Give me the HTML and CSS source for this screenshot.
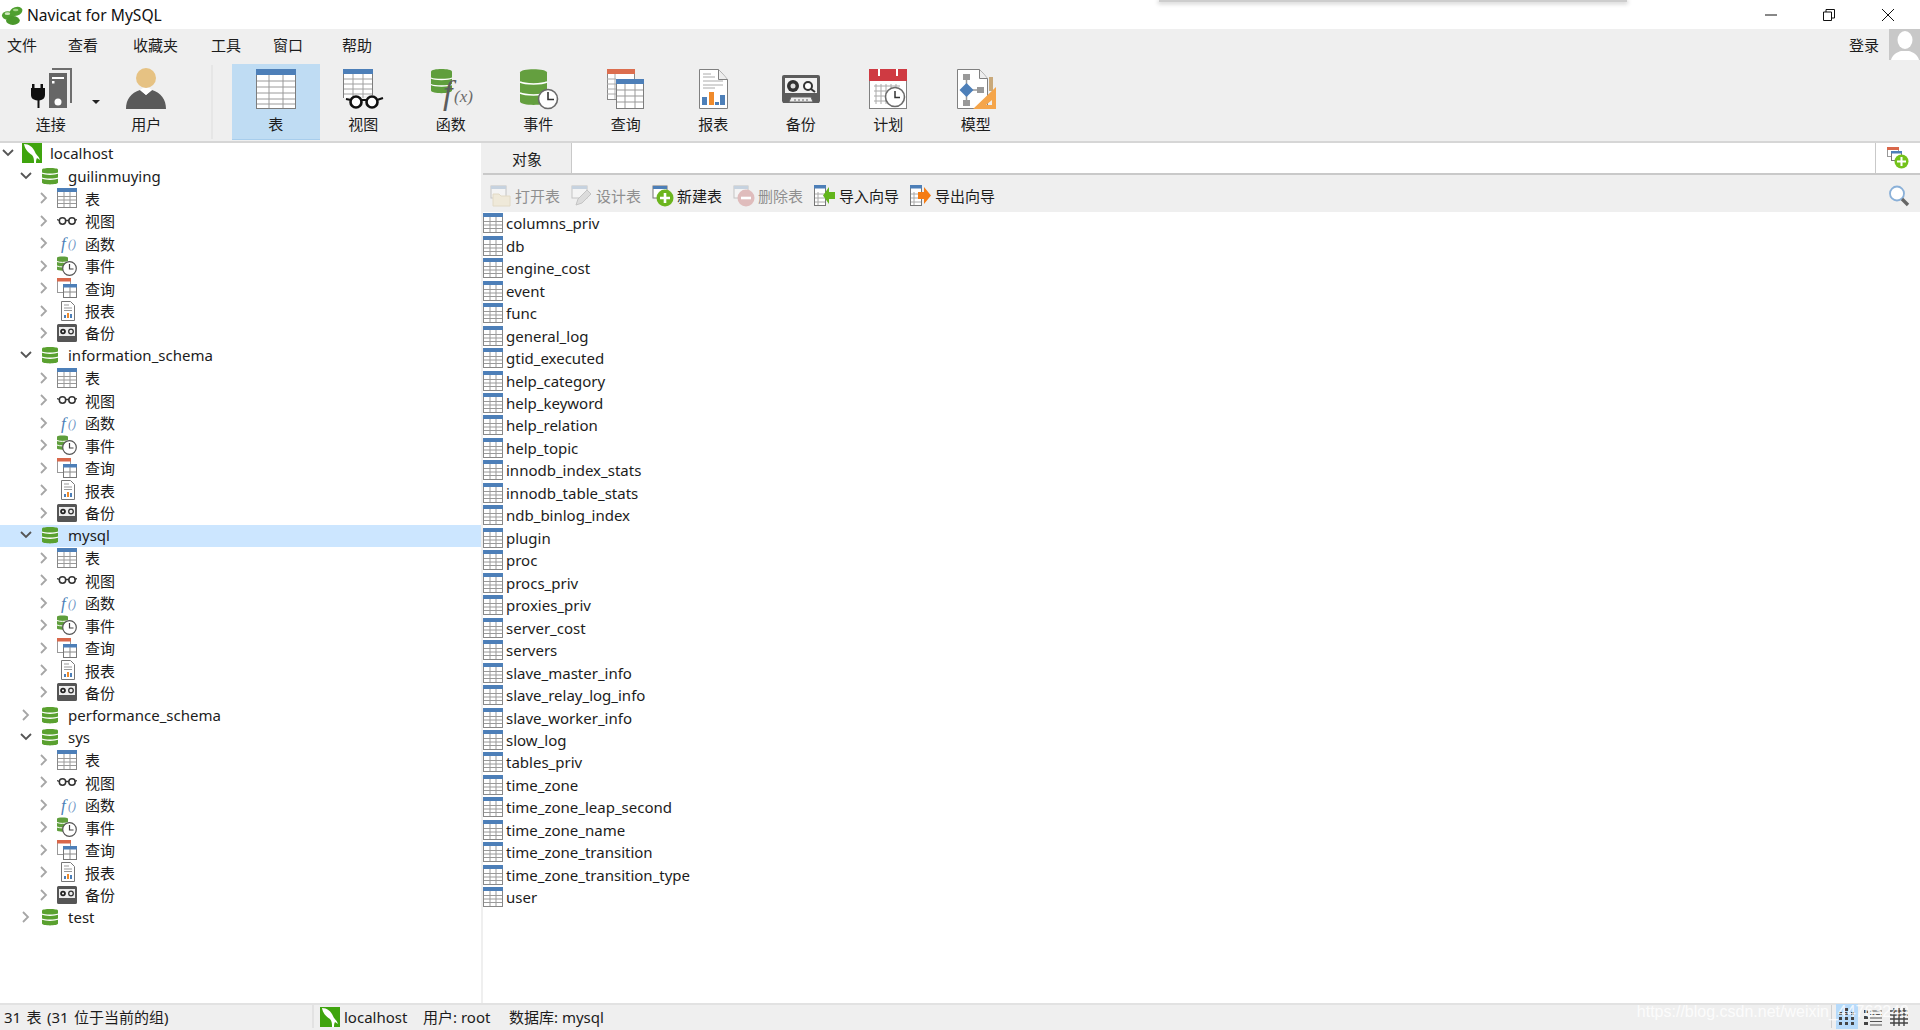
FILE: index.html
```html
<!DOCTYPE html>
<html lang="zh">
<head>
<meta charset="utf-8">
<title>Navicat for MySQL</title>
<link rel="stylesheet" href="styles.css">
</head>
<body>
<svg class="defs" aria-hidden="true">
  <symbol id="logo" viewBox="0 0 24 24">
    <ellipse cx="7.500" cy="12.500" rx="6.500" ry="4.500" fill="#4f9f2f"/>
    <ellipse cx="16.500" cy="8" rx="7" ry="4.800" fill="#4f9f2f" transform="rotate(-18 16.500 8)"/>
    <ellipse cx="13" cy="18" rx="7.500" ry="4.800" fill="#4a982b"/>
    <ellipse cx="7" cy="10.500" rx="3" ry="1.400" fill="#cfe8bd"/>
    <ellipse cx="16" cy="6.500" rx="3" ry="1.300" fill="#a6d68a"/>
  </symbol>
  <symbol id="mysql" viewBox="0 0 20 20">
    <rect width="20" height="20" fill="#3fa40e"/>
    <path d="M2 1c5 0 9 3 11 8 1 3 4 4 5 8l-3-2c-1 2-1 3-1 5h-2c0-3 0-6-2-8C7 10 3 7 2 1z" fill="#fff"/>
  </symbol>
  <symbol id="db" viewBox="0 0 16 18">
    <path d="M0 2.500C0 .5 16 .5 16 2.500v13c0 2.500-16 2.500-16 0z" fill="#5aa12f"/>
    <path d="M0 6c3 1.600 13 1.600 16 0M0 11c3 1.600 13 1.600 16 0" fill="none" stroke="#fff" stroke-width="1.400"/>
  </symbol>
  <symbol id="chev-r" viewBox="0 0 12 14"><path d="M3 2l5 5-5 5" fill="none" stroke="#a6a6a6" stroke-width="1.800"/></symbol>
  <symbol id="chev-d" viewBox="0 0 14 12"><path d="M2 3l5 5 5-5" fill="none" stroke="#555" stroke-width="1.800"/></symbol>
  <symbol id="s-tbl" viewBox="0 0 20 20">
    <rect x=".5" y=".5" width="19" height="19" fill="#fff" stroke="#888"/>
    <rect width="20" height="4" fill="#4d7fb8"/>
    <path d="M7 4v15M13 4v15M1 8.500h18M1 12h18M1 15.500h18" stroke="#9a9a9a"/>
  </symbol>
  <symbol id="s-glass" viewBox="0 0 20 20">
    <circle cx="5.500" cy="10" r="3.200" fill="none" stroke="#333" stroke-width="1.500"/>
    <circle cx="15" cy="10" r="3.200" fill="none" stroke="#333" stroke-width="1.500"/>
    <path d="M8.500 9.500h3.500M0 8.500l2.500 1M20 8.500l-2.500 1" stroke="#333" stroke-width="1.300"/>
  </symbol>
  <symbol id="s-event" viewBox="0 0 20 20">
    <path d="M0 1.500C0 0 11 0 11 1.500v12c0 1.500-11 1.500-11 0z" fill="#5f9e3c"/>
    <path d="M0 5.500c3 1.200 8 1.200 11 0M0 10c3 1.200 8 1.200 11 0" stroke="#fff" fill="none"/>
    <circle cx="12.500" cy="12.500" r="6.800" fill="#fff" stroke="#555" stroke-width="1.200"/>
    <path d="M12.500 8v5h4" fill="none" stroke="#444" stroke-width="1.200"/>
  </symbol>
  <symbol id="s-query" viewBox="0 0 20 20">
    <rect x=".5" y=".5" width="13" height="14" fill="#fff" stroke="#999"/>
    <rect width="14" height="3.500" fill="#d9674a"/>
    <rect x="6.500" y="6.500" width="13" height="13" fill="#fff" stroke="#777"/>
    <rect x="6" y="6" width="14" height="3.500" fill="#4d7fb8"/>
    <path d="M13 9v10M7 14h12" stroke="#888"/>
  </symbol>
  <symbol id="s-report" viewBox="0 0 20 20">
    <path d="M4.500.5h9l4 4v15h-13z" fill="#fff" stroke="#777"/>
    <path d="M7 4h5M7 7h8M7 9.500h8" stroke="#999"/>
    <rect x="7" y="14" width="2" height="3" fill="#4d7fb8"/>
    <rect x="10" y="12" width="2" height="5" fill="#ee8a2a"/>
    <rect x="13" y="13" width="2" height="4" fill="#4d7fb8"/>
  </symbol>
  <symbol id="s-tape" viewBox="0 0 20 20">
    <path d="M1.500 1h17A1.500 1.500 0 0 1 20 2.500v15a1.500 1.500 0 0 1-1.500 1.500h-17A1.500 1.500 0 0 1 0 17.500v-15A1.500 1.500 0 0 1 1.500 1z" fill="#555"/>
    <rect x="2" y="4" width="16" height="9" fill="#eee"/>
    <circle cx="6" cy="8.500" r="2.800" fill="#222"/><circle cx="6" cy="8.500" r="1" fill="#fff"/>
    <circle cx="14" cy="8.500" r="2.300" fill="none" stroke="#333" stroke-width="1.300"/>
  </symbol>

  <symbol id="t-conn" viewBox="0 0 44 44">
    <path d="M23 2h19v34" fill="none" stroke="#6e6e6e" stroke-width="2"/>
    <rect x="20" y="6" width="18" height="35" fill="#666"/>
    <rect x="23" y="10" width="12" height="2" fill="#fff"/>
    <rect x="23" y="14" width="2.500" height="2.500" fill="#fff"/>
    <circle cx="29" cy="35" r="3.500" fill="#fff"/>
    <path d="M3 17h2.500v4h6v-4H14v4h2v7c0 3-2 5-5.500 5.500V41h-2v-7.500C4 33 2 31 2 28v-7h1z" fill="#111"/>
  </symbol>
  <symbol id="t-user" viewBox="0 0 44 44">
    <circle cx="22" cy="11" r="10" fill="#e6c283"/>
    <path d="M2 42c0-10 5-16 14-19l6 5 6-5c9 3 14 9 14 19z" fill="#5a5a5a"/>
    <path d="M16 23l6 5 6-5-3-2h-6z" fill="#fff"/>
  </symbol>
  <symbol id="t-table" viewBox="0 0 44 44">
    <rect x="2.500" y="2.500" width="39" height="39" fill="#fff" stroke="#7d7d7d"/>
    <rect x="2" y="2" width="40" height="6" fill="#4d7fb8"/>
    <path d="M15 8v33M29 8v33M3 14h38M3 20h38M3 26h38M3 32h38M3 37h38" stroke="#9a9a9a"/>
  </symbol>
  <symbol id="t-view" viewBox="0 0 44 44">
    <path d="M2.500 31V2.500h29V28" fill="#fff" stroke="#7d7d7d"/>
    <rect x="2" y="2" width="30" height="5" fill="#4d7fb8"/>
    <path d="M12 7v24M22 7v24M3 12h28M3 17h28M3 22h28M3 27h28" stroke="#a0a0a0"/>
    <circle cx="15" cy="35" r="5.500" fill="#fff" stroke="#111" stroke-width="2.600"/>
    <circle cx="31" cy="35" r="5.500" fill="#fff" stroke="#111" stroke-width="2.600"/>
    <path d="M20 33h6M5 32l5 1M42 31l-6 2" stroke="#111" stroke-width="2.200"/>
  </symbol>
  <symbol id="t-event" viewBox="0 0 44 44">
    <path d="M4 5.500C4 1 31 1 31 5.500v29c0 4.500-27 4.500-27 0z" fill="#649f3f"/>
    <path d="M4 15c5 2.500 22 2.500 27 0M4 26c5 2.500 22 2.500 27 0" stroke="#fff" fill="none" stroke-width="1.500"/>
    <circle cx="32" cy="32" r="9.500" fill="#fff" stroke="#6a6a6a" stroke-width="1.600"/>
    <path d="M32 25v7.500h6" fill="none" stroke="#333" stroke-width="1.600"/>
  </symbol>
  <symbol id="t-query" viewBox="0 0 44 44">
    <rect x="3.500" y="2.500" width="27" height="30" fill="#fff" stroke="#888"/>
    <rect x="3" y="2" width="28" height="5" fill="#dc6e4f"/>
    <path d="M11 7v25M3 12h9M3 17h9M3 22h9M3 27h9" stroke="#aaa"/>
    <rect x="12.500" y="12.500" width="27" height="29" fill="#fff" stroke="#7d7d7d"/>
    <rect x="12" y="12" width="28" height="5" fill="#4d7fb8"/>
    <path d="M21 17v24M31 17v24M13 23h26M13 29h26M13 35h26" stroke="#999"/>
  </symbol>
  <symbol id="t-report" viewBox="0 0 44 44">
    <path d="M8.500 2.500h19l9 10v29h-28z" fill="#fff" stroke="#808080"/>
    <path d="M27.500 2.500v10h9" fill="#eee" stroke="#808080"/>
    <path d="M12 7h8M12 10h12M12 14h20M12 18h20M12 21h12" stroke="#aaa"/>
    <rect x="11" y="30" width="5" height="8" fill="#4d7fb8"/>
    <rect x="18" y="25" width="5" height="13" fill="#ef8a2b"/>
    <rect x="24" y="35" width="4" height="3" fill="#4d7fb8"/>
    <rect x="29" y="28" width="5" height="10" fill="#4d7fb8"/>
  </symbol>
  <symbol id="t-tape" viewBox="0 0 44 44">
    <path d="M5 8h34a2 2 0 0 1 2 2v24l-1 2H4l-1-2V10a2 2 0 0 1 2-2z" fill="#5c5c5c"/>
    <rect x="6" y="11" width="32" height="15" fill="#f2f2f2"/>
    <circle cx="14" cy="19" r="6" fill="#333"/><circle cx="14" cy="19" r="2.500" fill="#ddd"/>
    <circle cx="29" cy="19" r="4" fill="#fff" stroke="#333" stroke-width="2"/>
    <path d="M32 22l4 3" stroke="#333" stroke-width="2"/>
    <path d="M10 35l2-5h20l2 5z" fill="#eee" stroke="#666"/>
    <path d="M15 33h14" stroke="#666" stroke-dasharray="2 2"/>
  </symbol>
  <symbol id="t-plan" viewBox="0 0 44 44">
    <rect x="3.500" y="2.500" width="37" height="39" fill="#fff" stroke="#808080"/>
    <rect x="3" y="2" width="38" height="12" fill="#cf3a42"/>
    <path d="M13 2v7M31 2v7" stroke="#fff" stroke-width="2"/>
    <path d="M8 19h26M8 24h26M8 29h26M8 34h26M10 17v20M15 17v20M20 17v20M25 17v20M30 17v20" stroke="#aaa"/>
    <circle cx="29" cy="30" r="9.500" fill="#fff" stroke="#6a6a6a" stroke-width="1.600"/>
    <path d="M29 24v6.500h5" fill="none" stroke="#333" stroke-width="1.500"/>
  </symbol>
  <symbol id="t-model" viewBox="0 0 44 44">
    <path d="M3.500 2.500h22l8 9v30h-30z" fill="#fff" stroke="#808080"/>
    <path d="M25.500 2.500v9h8" fill="#eee" stroke="#808080"/>
    <rect x="9" y="7" width="7" height="6" fill="#999"/>
    <rect x="9" y="33" width="7" height="6" fill="#999"/>
    <rect x="23" y="20" width="7" height="6" fill="#999"/>
    <path d="M12.500 13v20M17 23h7" stroke="#999" stroke-width="1.500"/>
    <path d="M12.500 16l7 7-7 7-7-7z" fill="#4d7fb8"/>
    <rect x="35" y="10" width="4" height="14" fill="#c9a97a"/>
    <path d="M42 20v22H19zM38 33l-6 5h6z" fill="#f5a54a" fill-rule="evenodd"/>
  </symbol>

  <symbol id="o-open" viewBox="0 0 22 22">
    <rect x="1" y="1" width="15" height="12" fill="#f4f4f4" stroke="#c4c4c4"/>
    <rect x="1" y="1" width="15" height="3" fill="#c6d2df"/>
    <path d="M3 9h6l2 2h9v10H3z" fill="#efe9d9" stroke="#e2dac6"/>
  </symbol>
  <symbol id="o-design" viewBox="0 0 22 22">
    <rect x="1" y="1" width="15" height="12" fill="#f4f4f4" stroke="#c4c4c4"/>
    <rect x="1" y="1" width="15" height="3" fill="#c6d2df"/>
    <path d="M5 20l2-6 9-9 4 4-9 9z" fill="#dcdcdc" stroke="#c4c4c4"/>
  </symbol>
  <symbol id="o-new" viewBox="0 0 22 22">
    <rect x="1" y="1" width="14" height="12" fill="#fff" stroke="#777"/>
    <rect x="1" y="1" width="14" height="3" fill="#4d7fb8"/>
    <circle cx="13" cy="13" r="8.500" fill="#6cb51e"/>
    <path d="M13 8v10M8 13h10" stroke="#fff" stroke-width="2.600"/>
  </symbol>
  <symbol id="o-del" viewBox="0 0 22 22">
    <rect x="1" y="1" width="14" height="12" fill="#f4f4f4" stroke="#c4c4c4"/>
    <rect x="1" y="1" width="14" height="3" fill="#c6d2df"/>
    <circle cx="13" cy="13" r="8.500" fill="#dfbcbc"/>
    <path d="M8 13h10" stroke="#fff" stroke-width="2.600"/>
  </symbol>
  <symbol id="o-imp" viewBox="0 0 22 22">
    <rect x=".5" y=".5" width="11" height="20" fill="#fff" stroke="#777"/>
    <rect x="0" y="0" width="12" height="3.500" fill="#4d7fb8"/>
    <path d="M4 7v13M1 9h10M1 13h10M1 17h10" stroke="#aaa"/>
    <path d="M21 7v7h-6v5l-6-8.500L15 2v5z" fill="#63b51c"/>
  </symbol>
  <symbol id="o-exp" viewBox="0 0 22 22">
    <rect x=".5" y=".5" width="11" height="20" fill="#fff" stroke="#777"/>
    <rect x="0" y="0" width="12" height="3.500" fill="#4d7fb8"/>
    <path d="M4 7v13M1 9h10M1 13h10M1 17h10" stroke="#aaa"/>
    <path d="M8 7h6V2l7 8.500-7 8.500v-5H8z" fill="#f57c14"/>
  </symbol>
  <symbol id="o-add" viewBox="0 0 22 22">
    <rect x=".5" y=".5" width="11" height="9" fill="#fff" stroke="#999"/>
    <rect width="12" height="3" fill="#d9674a"/>
    <rect x="4.500" y="4.500" width="10" height="9" fill="#fff" stroke="#777"/>
    <rect x="4" y="4" width="11" height="2.500" fill="#4d7fb8"/>
    <circle cx="14.500" cy="14.500" r="7" fill="#74c21a"/>
    <path d="M14.500 10v9M10 14.500h9" stroke="#fff" stroke-width="2"/>
  </symbol>
  <symbol id="search" viewBox="0 0 22 22">
    <circle cx="9" cy="8.500" r="7" fill="#fff" stroke="#8ab0d8" stroke-width="1.800"/>
    <path d="M14 14l6 6" stroke="#666" stroke-width="3.400"/>
  </symbol>
  <symbol id="person" viewBox="0 0 31 31">
    <rect width="31" height="31" fill="#c8c8c8"/>
    <ellipse cx="16" cy="11" rx="7.500" ry="9" fill="#fff"/>
    <path d="M2 31c1-5 6-8 10-9h8c4 1 9 4 10 9z" fill="#fff"/>
  </symbol>
  <symbol id="v-grid" viewBox="0 0 20 20"><path d="M2 5h3v3H2zM8 5h3v3H8zM14 5h3v3h-3zM2 10h3v3H2zM8 10h3v3H8zM14 10h3v3h-3zM2 15h3v3H2zM8 15h3v3H8zM14 15h3v3h-3zM8 1h3v3H8z" fill="#444"/></symbol>
  <symbol id="v-list" viewBox="0 0 20 20"><path d="M1 3h4v3H1zM1 9h4v3H1zM1 15h4v3H1z" fill="#444"/><path d="M7 4h12M7 7.500h12M7 11h12M7 14.500h12M7 18h12" stroke="#555"/></symbol>
  <symbol id="v-detail" viewBox="0 0 20 20"><path d="M1 4h18M1 8h18M1 12h18M1 16h18M5 1v18M10 1v18M15 1v18" stroke="#444" stroke-width="1.400"/></symbol>
</svg>

<div class="app">
  <header class="titlebar">
    <svg class="logo"><use href="#logo"/></svg>
    <span class="title">Navicat for MySQL</span>
    <div class="ghost"></div>
    <div class="winctl">
      <svg class="wbtn" viewBox="0 0 12 12"><path d="M0 6h12" stroke="#111"/></svg>
      <svg class="wbtn" viewBox="0 0 12 12"><path d="M.5 3h8v8.500h-8zM3 3V.5h8.500V9H9" fill="none" stroke="#111"/></svg>
      <svg class="wbtn" viewBox="0 0 12 12"><path d="M0 0l12 12M12 0L0 12" stroke="#111"/></svg>
    </div>
  </header>

  <nav class="menubar">
    <span>文件</span><span>查看</span><span>收藏夹</span><span>工具</span><span>窗口</span><span>帮助</span>
    <div class="login"><span>登录</span><svg class="avatar"><use href="#person"/></svg></div>
  </nav>

  <div class="toolbar">
    <div class="tool"><svg class="ticon"><use href="#t-conn"/></svg><span>连接</span></div>
    <i class="caret"></i>
    <div class="tool"><svg class="ticon"><use href="#t-user"/></svg><span>用户</span></div>
    <i class="sep"></i>
    <div class="tool active"><svg class="ticon"><use href="#t-table"/></svg><span>表</span></div>
    <div class="tool"><svg class="ticon"><use href="#t-view"/></svg><span>视图</span></div>
    <div class="tool"><svg class="ticon" viewBox="0 0 44 44"><path d="M2 4.500C2 1 23 1 23 4.500v19c0 3.500-21 3.500-21 0z" fill="#5f9e3c"/><path d="M2 11c4 2 17 2 21 0M2 17.500c4 2 17 2 21 0" stroke="#fff" fill="none" stroke-width="1.300"/><text class="fn-b" x="14" y="37">f</text><text class="fn-x" x="25" y="35">(x)</text></svg><span>函数</span></div>
    <div class="tool"><svg class="ticon"><use href="#t-event"/></svg><span>事件</span></div>
    <div class="tool"><svg class="ticon"><use href="#t-query"/></svg><span>查询</span></div>
    <div class="tool"><svg class="ticon"><use href="#t-report"/></svg><span>报表</span></div>
    <div class="tool"><svg class="ticon"><use href="#t-tape"/></svg><span>备份</span></div>
    <div class="tool"><svg class="ticon"><use href="#t-plan"/></svg><span>计划</span></div>
    <div class="tool"><svg class="ticon"><use href="#t-model"/></svg><span>模型</span></div>
  </div>

  <main class="main">
    <aside class="tree">
      <div class="row l0"><svg class="chev"><use href="#chev-d"/></svg><svg class="sq"><use href="#mysql"/></svg><span>localhost</span></div>

      <div class="row l1"><svg class="chev"><use href="#chev-d"/></svg><svg class="dbi"><use href="#db"/></svg><span>guilinmuying</span></div>
      <div class="row l2"><svg class="chev"><use href="#chev-r"/></svg><svg class="ic"><use href="#s-tbl"/></svg><span>表</span></div>
      <div class="row l2"><svg class="chev"><use href="#chev-r"/></svg><svg class="ic"><use href="#s-glass"/></svg><span>视图</span></div>
      <div class="row l2"><svg class="chev"><use href="#chev-r"/></svg><svg class="ic" viewBox="0 0 20 20"><text class="fn-s" x="4" y="15.500">f</text><text class="fn-p" x="11" y="15">()</text></svg><span>函数</span></div>
      <div class="row l2"><svg class="chev"><use href="#chev-r"/></svg><svg class="ic"><use href="#s-event"/></svg><span>事件</span></div>
      <div class="row l2"><svg class="chev"><use href="#chev-r"/></svg><svg class="ic"><use href="#s-query"/></svg><span>查询</span></div>
      <div class="row l2"><svg class="chev"><use href="#chev-r"/></svg><svg class="ic"><use href="#s-report"/></svg><span>报表</span></div>
      <div class="row l2"><svg class="chev"><use href="#chev-r"/></svg><svg class="ic"><use href="#s-tape"/></svg><span>备份</span></div>

      <div class="row l1"><svg class="chev"><use href="#chev-d"/></svg><svg class="dbi"><use href="#db"/></svg><span>information_schema</span></div>
      <div class="row l2"><svg class="chev"><use href="#chev-r"/></svg><svg class="ic"><use href="#s-tbl"/></svg><span>表</span></div>
      <div class="row l2"><svg class="chev"><use href="#chev-r"/></svg><svg class="ic"><use href="#s-glass"/></svg><span>视图</span></div>
      <div class="row l2"><svg class="chev"><use href="#chev-r"/></svg><svg class="ic" viewBox="0 0 20 20"><text class="fn-s" x="4" y="15.500">f</text><text class="fn-p" x="11" y="15">()</text></svg><span>函数</span></div>
      <div class="row l2"><svg class="chev"><use href="#chev-r"/></svg><svg class="ic"><use href="#s-event"/></svg><span>事件</span></div>
      <div class="row l2"><svg class="chev"><use href="#chev-r"/></svg><svg class="ic"><use href="#s-query"/></svg><span>查询</span></div>
      <div class="row l2"><svg class="chev"><use href="#chev-r"/></svg><svg class="ic"><use href="#s-report"/></svg><span>报表</span></div>
      <div class="row l2"><svg class="chev"><use href="#chev-r"/></svg><svg class="ic"><use href="#s-tape"/></svg><span>备份</span></div>

      <div class="row l1 selected"><svg class="chev"><use href="#chev-d"/></svg><svg class="dbi"><use href="#db"/></svg><span>mysql</span></div>
      <div class="row l2"><svg class="chev"><use href="#chev-r"/></svg><svg class="ic"><use href="#s-tbl"/></svg><span>表</span></div>
      <div class="row l2"><svg class="chev"><use href="#chev-r"/></svg><svg class="ic"><use href="#s-glass"/></svg><span>视图</span></div>
      <div class="row l2"><svg class="chev"><use href="#chev-r"/></svg><svg class="ic" viewBox="0 0 20 20"><text class="fn-s" x="4" y="15.500">f</text><text class="fn-p" x="11" y="15">()</text></svg><span>函数</span></div>
      <div class="row l2"><svg class="chev"><use href="#chev-r"/></svg><svg class="ic"><use href="#s-event"/></svg><span>事件</span></div>
      <div class="row l2"><svg class="chev"><use href="#chev-r"/></svg><svg class="ic"><use href="#s-query"/></svg><span>查询</span></div>
      <div class="row l2"><svg class="chev"><use href="#chev-r"/></svg><svg class="ic"><use href="#s-report"/></svg><span>报表</span></div>
      <div class="row l2"><svg class="chev"><use href="#chev-r"/></svg><svg class="ic"><use href="#s-tape"/></svg><span>备份</span></div>

      <div class="row l1"><svg class="chev"><use href="#chev-r"/></svg><svg class="dbi"><use href="#db"/></svg><span>performance_schema</span></div>

      <div class="row l1"><svg class="chev"><use href="#chev-d"/></svg><svg class="dbi"><use href="#db"/></svg><span>sys</span></div>
      <div class="row l2"><svg class="chev"><use href="#chev-r"/></svg><svg class="ic"><use href="#s-tbl"/></svg><span>表</span></div>
      <div class="row l2"><svg class="chev"><use href="#chev-r"/></svg><svg class="ic"><use href="#s-glass"/></svg><span>视图</span></div>
      <div class="row l2"><svg class="chev"><use href="#chev-r"/></svg><svg class="ic" viewBox="0 0 20 20"><text class="fn-s" x="4" y="15.500">f</text><text class="fn-p" x="11" y="15">()</text></svg><span>函数</span></div>
      <div class="row l2"><svg class="chev"><use href="#chev-r"/></svg><svg class="ic"><use href="#s-event"/></svg><span>事件</span></div>
      <div class="row l2"><svg class="chev"><use href="#chev-r"/></svg><svg class="ic"><use href="#s-query"/></svg><span>查询</span></div>
      <div class="row l2"><svg class="chev"><use href="#chev-r"/></svg><svg class="ic"><use href="#s-report"/></svg><span>报表</span></div>
      <div class="row l2"><svg class="chev"><use href="#chev-r"/></svg><svg class="ic"><use href="#s-tape"/></svg><span>备份</span></div>

      <div class="row l1"><svg class="chev"><use href="#chev-r"/></svg><svg class="dbi"><use href="#db"/></svg><span>test</span></div>
    </aside>

    <section class="pane">
      <div class="tabs">
        <div class="tab">对象</div>
        <div class="tabfill"></div>
        <div class="tabadd"><svg class="addi"><use href="#o-add"/></svg></div>
      </div>
      <div class="actions">
        <div class="act off"><svg class="ai"><use href="#o-open"/></svg><span>打开表</span></div>
        <div class="act off"><svg class="ai"><use href="#o-design"/></svg><span>设计表</span></div>
        <div class="act"><svg class="ai"><use href="#o-new"/></svg><span>新建表</span></div>
        <div class="act off"><svg class="ai"><use href="#o-del"/></svg><span>删除表</span></div>
        <div class="act"><svg class="ai"><use href="#o-imp"/></svg><span>导入向导</span></div>
        <div class="act"><svg class="ai"><use href="#o-exp"/></svg><span>导出向导</span></div>
        <svg class="searchi"><use href="#search"/></svg>
      </div>
      <div class="list">
        <div class="item"><svg class="ic"><use href="#s-tbl"/></svg><span>columns_priv</span></div>
        <div class="item"><svg class="ic"><use href="#s-tbl"/></svg><span>db</span></div>
        <div class="item"><svg class="ic"><use href="#s-tbl"/></svg><span>engine_cost</span></div>
        <div class="item"><svg class="ic"><use href="#s-tbl"/></svg><span>event</span></div>
        <div class="item"><svg class="ic"><use href="#s-tbl"/></svg><span>func</span></div>
        <div class="item"><svg class="ic"><use href="#s-tbl"/></svg><span>general_log</span></div>
        <div class="item"><svg class="ic"><use href="#s-tbl"/></svg><span>gtid_executed</span></div>
        <div class="item"><svg class="ic"><use href="#s-tbl"/></svg><span>help_category</span></div>
        <div class="item"><svg class="ic"><use href="#s-tbl"/></svg><span>help_keyword</span></div>
        <div class="item"><svg class="ic"><use href="#s-tbl"/></svg><span>help_relation</span></div>
        <div class="item"><svg class="ic"><use href="#s-tbl"/></svg><span>help_topic</span></div>
        <div class="item"><svg class="ic"><use href="#s-tbl"/></svg><span>innodb_index_stats</span></div>
        <div class="item"><svg class="ic"><use href="#s-tbl"/></svg><span>innodb_table_stats</span></div>
        <div class="item"><svg class="ic"><use href="#s-tbl"/></svg><span>ndb_binlog_index</span></div>
        <div class="item"><svg class="ic"><use href="#s-tbl"/></svg><span>plugin</span></div>
        <div class="item"><svg class="ic"><use href="#s-tbl"/></svg><span>proc</span></div>
        <div class="item"><svg class="ic"><use href="#s-tbl"/></svg><span>procs_priv</span></div>
        <div class="item"><svg class="ic"><use href="#s-tbl"/></svg><span>proxies_priv</span></div>
        <div class="item"><svg class="ic"><use href="#s-tbl"/></svg><span>server_cost</span></div>
        <div class="item"><svg class="ic"><use href="#s-tbl"/></svg><span>servers</span></div>
        <div class="item"><svg class="ic"><use href="#s-tbl"/></svg><span>slave_master_info</span></div>
        <div class="item"><svg class="ic"><use href="#s-tbl"/></svg><span>slave_relay_log_info</span></div>
        <div class="item"><svg class="ic"><use href="#s-tbl"/></svg><span>slave_worker_info</span></div>
        <div class="item"><svg class="ic"><use href="#s-tbl"/></svg><span>slow_log</span></div>
        <div class="item"><svg class="ic"><use href="#s-tbl"/></svg><span>tables_priv</span></div>
        <div class="item"><svg class="ic"><use href="#s-tbl"/></svg><span>time_zone</span></div>
        <div class="item"><svg class="ic"><use href="#s-tbl"/></svg><span>time_zone_leap_second</span></div>
        <div class="item"><svg class="ic"><use href="#s-tbl"/></svg><span>time_zone_name</span></div>
        <div class="item"><svg class="ic"><use href="#s-tbl"/></svg><span>time_zone_transition</span></div>
        <div class="item"><svg class="ic"><use href="#s-tbl"/></svg><span>time_zone_transition_type</span></div>
        <div class="item"><svg class="ic"><use href="#s-tbl"/></svg><span>user</span></div>
      </div>
    </section>
  </main>

  <footer class="status">
    <div class="st-count">31 表 (31 位于当前的组)</div>
    <div class="st-conn">
      <svg class="sq"><use href="#mysql"/></svg>
      <span class="st-host">localhost</span>
      <span class="st-user">用户: root</span>
      <span>数据库: mysql</span>
    </div>
    <div class="views">
      <span class="vbtn on"><svg class="vi"><use href="#v-grid"/></svg></span>
      <span class="vbtn"><svg class="vi"><use href="#v-list"/></svg></span>
      <span class="vbtn"><svg class="vi"><use href="#v-detail"/></svg></span>
    </div>
    <div class="watermark">https://blog.csdn.net/weixin_44763249</div>
  </footer>
</div>
</body>
</html>
```

FILE: styles.css
```css
* { box-sizing: border-box; }
html, body { margin: 0; height: 100%; overflow: hidden; }
body {
  background: #fff;
  color: #1c1c1c;
  font-family: "Noto Sans", "Noto Sans CJK SC", sans-serif;
  font-size: 15px;
}
.defs { width: 0; height: 0; position: absolute; }
.app { display: flex; flex-direction: column; height: 1030px; }

.titlebar { height: 29px; flex: none; display: flex; align-items: center; background: #fff; position: relative; }
.logo { width: 22px; height: 22px; margin-left: 1px; }
.title { margin-left: 4px; font-size: 15.6px; color: #111; }
.ghost {
  position: absolute; left: 1159px; top: 0; width: 468px; height: 2px;
  background: #cdcdcd; box-shadow: 0 1px 4px 1px rgba(0,0,0,.18);
}
.winctl { margin-left: auto; display: grid; grid-template-columns: 58px 58px 60px; margin-right: 2px; align-items: center; justify-items: center; }
.wbtn { width: 12px; height: 12px; }

.menubar {
  height: 31px; flex: none; background: #efefef;
  display: grid; grid-template-columns: 61px 65px 78px 62px 69px auto 1fr;
  align-items: center; padding-left: 7px; font-size: 15px;
}
.login { grid-column: 7; justify-self: end; display: flex; align-items: center; gap: 10px; height: 31px; }
.avatar { width: 31px; height: 31px; }

.toolbar {
  height: 83px; flex: none; background: #efefef; border-bottom: 2px solid #d6d6d6;
  display: flex; padding: 4px 0 0 7px;
}
.tool { width: 87.5px; height: 76px; display: flex; flex-direction: column; align-items: center; padding-top: 3px; font-size: 15px; }
.tool.active { background: #bfdcf3; border-bottom: 1px solid #a7cdec; }
.ticon { width: 44px; height: 44px; }
.tool span { line-height: 22px; margin-top: 2px; }
.caret { width: 0; height: 0; margin: 36px 3px 0 -3px; border: 4px solid transparent; border-top: 4px solid #222; align-self: flex-start; }
.sep { width: 2px; height: 74px; margin: 1px 19px 0 21px; background: #e6e6e6; }

.fn-s { font: italic 17px "Liberation Serif", serif; fill: #4d7fb8; }
.fn-p { font: italic 12px "Liberation Serif", serif; fill: #6f97c6; }
.fn-b { font: italic 34px "Liberation Serif", serif; fill: #5c5c5c; }
.fn-x { font: italic 17px "Liberation Serif", serif; fill: #6a6a6a; }

.main { flex: 1; display: flex; min-height: 0; }
.tree { width: 481px; flex: none; background: #fff; }
.row { height: 22.48px; display: flex; align-items: center; padding-bottom: 2px; }
.row.selected { background: #cce6ff; }
.l0 { padding-left: 1px; }
.l1 { padding-left: 19px; }
.l2 { padding-left: 37px; }
.chev { width: 14px; height: 14px; flex: none; }
.sq { width: 20px; height: 20px; flex: none; }
.l0 .sq { margin-left: 7px; }
.l0 span { margin-left: 8px; }
.dbi { width: 16px; height: 18px; flex: none; margin-left: 9px; }
.l1 span { margin-left: 10px; }
.ic { width: 20px; height: 20px; flex: none; }
.l2 .ic { margin-left: 6px; }
.l2 span { margin-left: 8px; }

.pane { flex: 1; min-width: 0; display: flex; flex-direction: column; border-left: 2px solid #efefef; }
.tabs { height: 32px; flex: none; display: flex; background: #efefef; border-bottom: 2px solid #c9c9c9; }
.tab { width: 88px; display: flex; align-items: center; justify-content: center; }
.tabfill { flex: 1; background: #fff; border-left: 1px solid #c9c9c9; border-right: 1px solid #c9c9c9; }
.tabadd { width: 44px; background: #fff; display: flex; align-items: center; justify-content: center; }
.addi { width: 22px; height: 22px; }

.actions { height: 37px; flex: none; background: #efefef; display: flex; align-items: center; padding: 4px 0 0 7px; }
.act { display: flex; align-items: center; gap: 3px; margin-right: 11px; }
.act.off { color: #8f8f8f; }
.ai { width: 22px; height: 22px; flex: none; }
.searchi { width: 22px; height: 22px; margin-left: auto; margin-right: 10px; }

.list { flex: 1; }
.item { height: 22.48px; display: flex; align-items: center; gap: 3px; }

.status {
  height: 27px; flex: none; background: #efefef; border-top: 2px solid #e2e2e2;
  display: flex; align-items: center; position: relative; padding-bottom: 2px;
}
.st-count { width: 312px; padding-left: 4px; word-spacing: 1.5px; }
.st-conn { display: flex; align-items: center; height: 100%; border-left: 2px solid #e2e2e2; padding-left: 6px; }
.st-host { margin-left: 4px; width: 79px; }
.st-user { width: 86px; }
.views { margin-left: auto; margin-right: 10px; display: flex; align-items: center; gap: 4px; height: 100%; border-left: 1px solid #cfcfcf; padding-left: 4px; }
.vbtn { width: 22px; height: 25px; display: flex; align-items: center; justify-content: center; }
.vbtn.on { background: #b6dafa; }
.vi { width: 20px; height: 20px; }
.watermark {
  position: absolute; right: 11px; top: -2px; font-family: "Liberation Sans", sans-serif;
  font-size: 16px; color: rgba(255,255,255,.8); white-space: nowrap;
}
```
